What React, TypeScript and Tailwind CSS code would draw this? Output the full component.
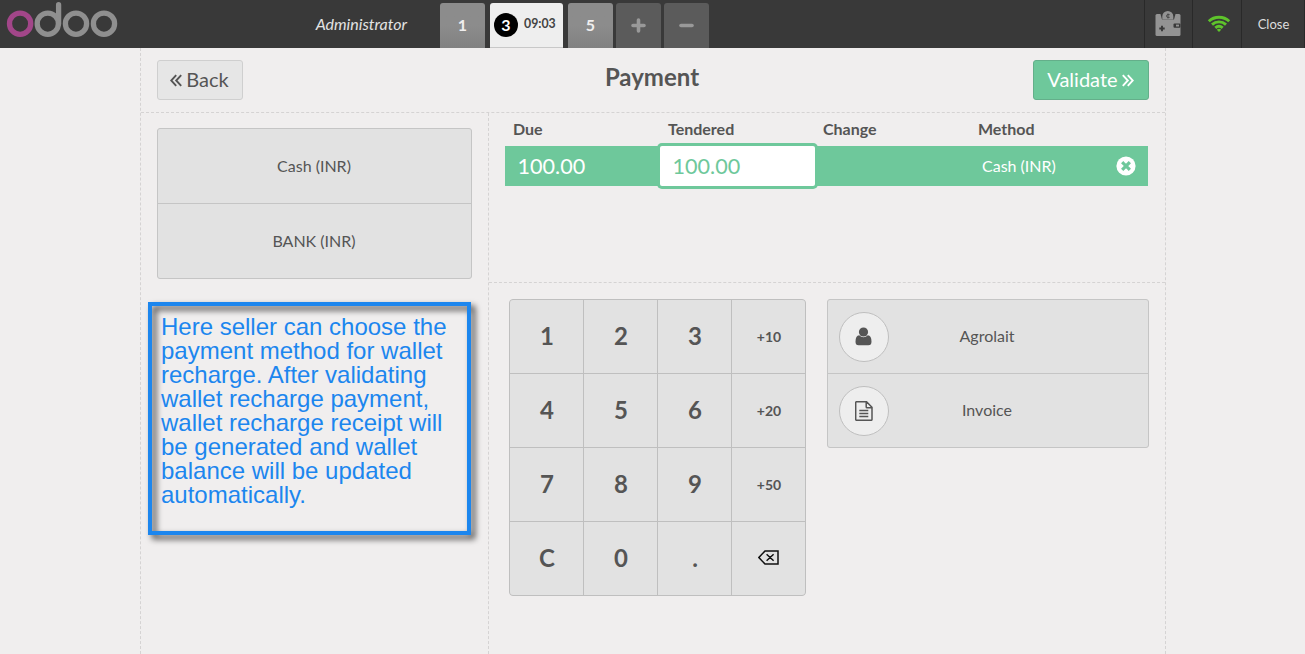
import React from "react";

const keys = ["1", "2", "3", "+10", "4", "5", "6", "+20", "7", "8", "9", "+50", "C", "0", ".", "back"];

function Logo() {
  return (
    <svg width="120" height="48" viewBox="0 0 120 48" fill="none" strokeWidth="5.3" className="block shrink-0">
      <g stroke="#8f8f8f">
        <circle cx="47.8" cy="23.7" r="10.6" />
        <circle cx="76" cy="23.7" r="10.6" />
        <circle cx="104" cy="23.7" r="10.6" />
        <path d="M58.6 4.7V23.7" strokeLinecap="round" />
      </g>
      <circle cx="20.1" cy="23.7" r="10.6" stroke="#a24689" />
    </svg>
  );
}

function Chevrons({ flip = false }: { flip?: boolean }) {
  return (
    <svg width="12" height="13" viewBox="0 0 12 13" fill="none" stroke="currentColor" strokeWidth="1.9" className={flip ? "-scale-x-100" : ""}>
      <path d="M6.2 1.2L1.2 6.5l5 5.3M11.2 1.2L6.2 6.5l5 5.3" />
    </svg>
  );
}

function Wallet() {
  return (
    <svg width="26" height="26" viewBox="0 0 26 26" className="block">
      <path d="M2 3h22q1.5 0 1.5 1.5v19q0 1.5-1.5 1.5H2Q.5 25 .5 23.500v-19Q.5 3 2 3z" fill="#939393" />
      <path d="M5.500 3h15l-1.500 5.500h-12z" fill="#393939" />
      <path d="M7.300 8.500V5.200a5.500 5.200 0 0 1 11 0v3.300z" fill="#939393" />
      <path d="M14.700 3.700q-3.200-1-3.200 1.300t3.200 1.300M13 2.500v5" stroke="#494949" strokeWidth="1" fill="none" />
      <path d="M4.300 17.500h5.400M7 14.800v5.400" stroke="#393939" strokeWidth="1.900" />
      <rect x="18.500" y="12.500" width="7" height="4.200" rx="1" fill="#393939" />
      <rect x="21" y="13.600" width="3" height="1.900" fill="#939393" />
    </svg>
  );
}

function Wifi() {
  return (
    <svg width="24" height="18" viewBox="0 0 24 18" fill="none" stroke="#5ec42b" strokeWidth="2.900" className="block">
      <path d="M1.800 6.200C7.500.9 16.500.9 22.200 6.200M5 9.600c4-3.600 10-3.600 14 0M8.300 12.800c2.200-1.900 5.200-1.900 7.400 0" />
      <path d="M9.800 14.700q2.200-1.700 4.400 0l-2.200 2.300z" fill="#5ec42b" stroke="none" />
    </svg>
  );
}

function Person() {
  return (
    <svg width="17" height="19" viewBox="0 0 17 19" fill="#555" className="block">
      <circle cx="8.500" cy="5" r="4.600" />
      <path d="M4.200 8.300Q.5 8.800.5 14.700.5 18.300 3.600 18.300h9.800q3.100 0 3.100-3.600 0-5.900-3.700-6.400-1.800 1.900-4.300 1.900T4.200 8.300z" />
    </svg>
  );
}

function Invoice() {
  return (
    <svg width="18" height="20" viewBox="0 0 18 20" fill="none" stroke="#555" strokeWidth="1.500" className="block">
      <path d="M1.600.7h9.900l5.500 5.600v12.100q0 .9-.9.900H1.600q-.9 0-.9-.9V1.600q0-.9.900-.9zM11.200.7v5.200q0 .9.900.9H17" />
      <path d="M4.300 9.500h9M4.300 12.500h9M4.300 15.500h9" />
    </svg>
  );
}

function Backspace() {
  return (
    <svg width="21" height="15" viewBox="0 0 21 15" fill="none" stroke="#111" strokeWidth="1.500" className="mr-px block">
      <path d="M7 .9h13v13.200H7L.9 7.500zM8.600 4.300l7 6.500M15.600 4.300l-7 6.500" />
    </svg>
  );
}

function TopBar() {
  return (
    <header className="flex h-12 bg-[#393939]">
      <Logo />
      <div className="flex w-[320px] items-center justify-end pr-[33px] text-base italic text-[#e3e3e3]">Administrator</div>
      <nav className="flex items-end text-base font-bold text-[#f0eeee]">
        <div className="flex h-[45px] w-[45px] items-center justify-center rounded-t-[3px] bg-linear-to-b from-[#8c8c8c] via-[#8c8c8c] to-[#818181] pb-0.5">1</div>
        <div className="ml-[5px] flex h-[45px] w-[73px] items-center rounded-t-[3px] border-b border-[#c8c8c8] bg-[#eeeeee] pl-1">
          <span className="flex size-6 items-center justify-center rounded-full bg-black pb-px text-white">3</span>
          <span className="relative -top-px ml-1.5 text-[12.3px] text-[#444]">09:03</span>
        </div>
        <div className="ml-[5px] flex h-[45px] w-[45px] items-center justify-center rounded-t-[3px] bg-linear-to-b from-[#8c8c8c] via-[#8c8c8c] to-[#818181] pb-0.5">5</div>
        <div className="ml-[3px] flex h-[45px] w-[45px] items-center justify-center rounded-t-[3px] bg-[#5b5b5b] pb-px">
          <svg width="15" height="15" viewBox="0 0 15 15" stroke="#999" strokeWidth="3.6" strokeLinecap="round"><path d="M2 7.500h11M7.500 2v11" /></svg>
        </div>
        <div className="ml-[3px] flex h-[45px] w-[45px] items-center justify-center rounded-t-[3px] bg-[#5b5b5b] pb-px">
          <svg width="15" height="15" viewBox="0 0 15 15" stroke="#999" strokeWidth="3.6" strokeLinecap="round"><path d="M2 7.500h11" /></svg>
        </div>
      </nav>
      <div className="ml-auto flex text-[13px] text-[#ddd]">
        <div className="flex w-12 items-center justify-center border-l border-[#292929] pr-px"><Wallet /></div>
        <div className="flex w-[49px] items-center justify-center border-l border-[#292929] pl-1"><Wifi /></div>
        <div className="flex w-16 items-center justify-center border-x border-[#292929] pl-px pt-0.5">Close</div>
      </div>
    </header>
  );
}

function PaymentLines() {
  return (
    <section className="h-[170px] border-b border-dashed border-[#d5d3d3] pl-4">
      <div className="grid h-[33px] grid-cols-[155px_155px_155px_178px] text-base font-bold leading-[32px]">
        <div className="pl-2">Due</div>
        <div className="pl-2">Tendered</div>
        <div className="pl-2">Change</div>
        <div className="pl-2">Method</div>
      </div>
      <div className="grid h-10 w-[643px] grid-cols-[155px_155px_155px_178px] bg-[#6ec89b] text-[21.6px] leading-10 text-white">
        <div className="pl-[12.500px]">100.00</div>
        <div className="rounded-[2px] bg-white pl-[12.500px] text-[#6ec89b] shadow-[0_0_0_3px_#6ec89b]">100.00</div>
        <div />
        <div className="flex items-center justify-between pl-3 pr-3 text-base">
          <span>Cash (INR)</span>
          <svg width="20" height="20" viewBox="0 0 20 20">
            <circle cx="10" cy="10" r="9.600" fill="white" />
            <path d="M7.300 7.300l5.400 5.400M12.700 7.300l-5.400 5.400" stroke="#6ec89b" strokeWidth="3.200" strokeLinecap="square" />
          </svg>
        </div>
      </div>
    </section>
  );
}

function Numpad() {
  return (
    <div className="grid size-[297px] grid-cols-4 grid-rows-4 gap-px overflow-hidden rounded-[4px] border border-[#bfbfbf] bg-[#bfbfbf]">
      {keys.map((key) => (
        <div
          key={key}
          className={"flex items-center justify-center bg-[#e2e2e2] font-bold " + (key.startsWith("+") ? "text-sm pl-px" : "text-2xl pb-0.5 pl-px")}
        >
          {key === "back" ? <Backspace /> : key}
        </div>
      ))}
    </div>
  );
}

function OptionRow({ icon, label }: { icon: React.ReactNode; label: string }) {
  return (
    <div className="flex h-[73px] items-center bg-[#e2e2e2] pl-[11px]">
      <div className="flex size-[50px] items-center justify-center rounded-full border border-[#bfbfbf] bg-[#eeeeee] pr-px">{icon}</div>
      <div className="flex-1 pb-0.5 pr-[63px] text-center">{label}</div>
    </div>
  );
}

function Note() {
  return (
    <aside className="relative ml-[7px] mt-[23px] h-[233px] w-[323px] pl-[13px] pt-[13px] font-['Liberation_Sans',sans-serif] text-[24px] leading-6 text-[#1c86ee]">
      <div className="absolute inset-0 border-4 border-[#1c86ee] drop-shadow-[4px_4px_3px_rgba(0,0,0,0.75)]" />
      <p className="relative whitespace-nowrap">
        Here seller can choose the<br />payment method for wallet<br />recharge. After validating<br />wallet recharge payment,<br />wallet recharge receipt will<br />be generated and wallet<br />balance will be updated<br />automatically.
      </p>
    </aside>
  );
}

export default function App() {
  return (
    <div className="flex h-[654px] w-[1305px] flex-col overflow-hidden bg-[#f0eeee] font-[Lato,sans-serif] text-base text-[#555]">
      <TopBar />
      <main className="ml-[140px] flex w-[1026px] flex-1 flex-col border-x border-dashed border-[#d5d3d3]">
        <div className="flex h-[65px] justify-between border-b border-dashed border-[#d5d3d3] px-4 pt-3">
          <button className="flex h-10 w-[86px] items-center justify-center gap-1 rounded-[3px] border border-[#cfcfcf] bg-[#e6e6e6] pr-px text-xl">
            <Chevrons /><span className="pb-0.5">Back</span>
          </button>
          <h1 className="pl-[28px] text-2xl font-bold leading-[34px]">Payment</h1>
          <button className="flex h-10 w-[116px] items-center justify-center gap-1 rounded-[3px] border border-[#64af8a] bg-[#6ec89b] pr-px text-xl text-white">
            <span className="pb-0.5">Validate</span><Chevrons flip />
          </button>
        </div>
        <div className="flex flex-1">
          <div className="w-[348px] border-r border-dashed border-[#d5d3d3]">
            <div className="ml-4 mt-[15px] flex h-[151px] w-[315px] flex-col gap-px overflow-hidden rounded-[3px] border border-[#c5c5c5] bg-[#c5c5c5] text-center leading-[74px]">
              <div className="h-[74px] bg-[#e2e2e2] pr-px">Cash (INR)</div>
              <div className="h-[74px] bg-[#e2e2e2] pr-px">BANK (INR)</div>
            </div>
            <Note />
          </div>
          <div className="flex-1">
            <PaymentLines />
            <section className="flex gap-[21px] pl-5 pt-4">
              <Numpad />
              <div className="flex h-[149px] w-[322px] flex-col gap-px overflow-hidden rounded-[3px] border border-[#c5c5c5] bg-[#c5c5c5]">
                <OptionRow icon={<Person />} label="Agrolait" />
                <OptionRow icon={<Invoice />} label="Invoice" />
              </div>
            </section>
          </div>
        </div>
      </main>
    </div>
  );
}
